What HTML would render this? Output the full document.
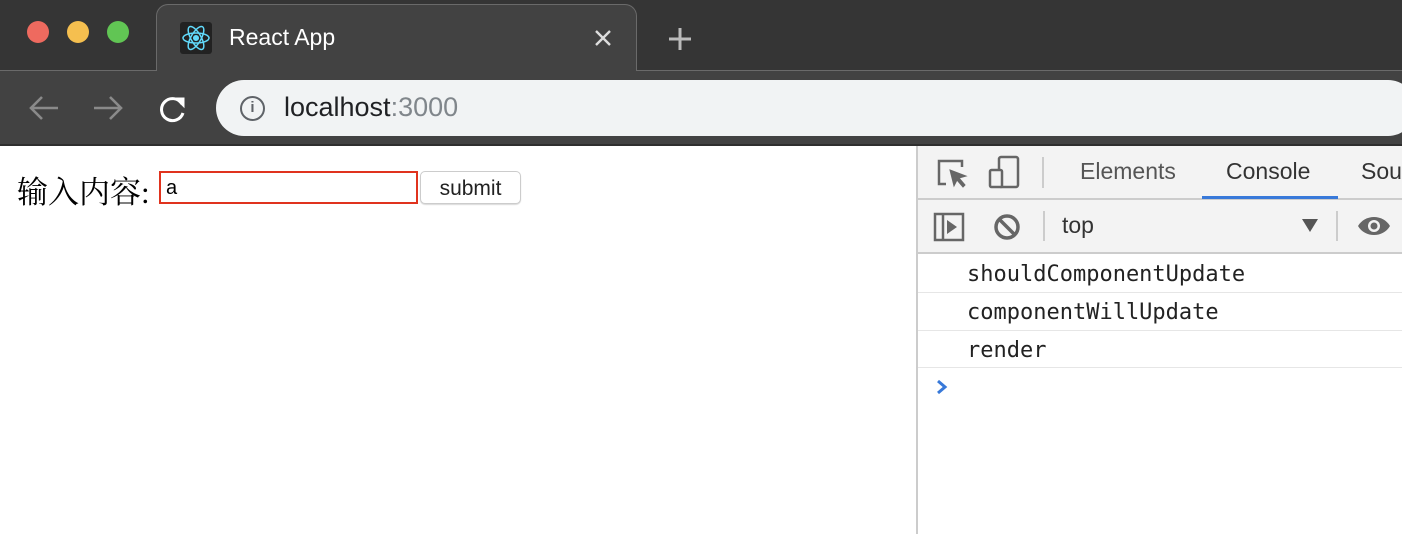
<!DOCTYPE html>
<html><head><meta charset="utf-8"><style>
*{margin:0;padding:0;box-sizing:border-box}
body{width:1402px;height:534px;overflow:hidden;background:#fff;font-family:"Liberation Sans",sans-serif;position:relative}
.abs{position:absolute}
.mono{font-family:"DejaVu Sans Mono","Liberation Mono",monospace}
</style></head><body>
<div class="abs" style="left:0;top:0;width:1402px;height:71px;background:#353535"></div>
<div class="abs" style="left:0;top:70px;width:1402px;height:1px;background:#6a6a6a"></div>
<div class="abs" style="left:156px;top:4px;width:481px;height:70px;background:#424242;border:1px solid #6a6a6a;border-bottom:none;border-radius:12px 12px 0 0"></div>
<div class="abs" style="left:0;top:71px;width:1402px;height:75px;background:#424242"></div>
<div class="abs" style="left:0;top:144px;width:1402px;height:2px;background:#2e2e2e"></div>
<div class="abs" style="left:27px;top:21px;width:22px;height:22px;border-radius:50%;background:#ee6a5f"></div>
<div class="abs" style="left:67px;top:21px;width:22px;height:22px;border-radius:50%;background:#f5bf4f"></div>
<div class="abs" style="left:107px;top:21px;width:22px;height:22px;border-radius:50%;background:#61c554"></div>
<div class="abs" style="left:180px;top:22px;width:32px;height:32px;background:#222;border-radius:3px"></div>
<svg class="abs" style="left:180px;top:22px" width="32" height="32" viewBox="0 0 32 32" fill="none" stroke="#61dafb" stroke-width="1.5"><ellipse cx="16" cy="16" rx="13" ry="5"/><ellipse cx="16" cy="16" rx="13" ry="5" transform="rotate(60 16 16)"/><ellipse cx="16" cy="16" rx="13" ry="5" transform="rotate(120 16 16)"/><circle cx="16" cy="16" r="2.3" fill="#61dafb"/></svg>
<div class="abs" style="left:229px;top:24px;color:#fff;font-size:23px">React App</div>
<svg class="abs" style="left:594px;top:29px" width="18" height="18" stroke="#ddd" stroke-width="2.4"><path d="M2 2L16 16M16 2L2 16"/></svg>
<svg class="abs" style="left:667px;top:26px" width="26" height="26" stroke="#bbb" stroke-width="3"><path d="M13 2V24M2 13H24"/></svg>
<svg class="abs" style="left:28px;top:94px" width="32" height="28" fill="none" stroke="#8a8a8a" stroke-width="2.6"><path d="M30 14H4M14 3L3 14L14 25"/></svg>
<svg class="abs" style="left:92px;top:94px" width="32" height="28" fill="none" stroke="#8a8a8a" stroke-width="2.6"><path d="M2 14H28M18 3L29 14L18 25"/></svg>
<svg class="abs" style="left:158px;top:93px" width="30" height="30" fill="none" stroke="#fff" stroke-width="3"><path d="M24 11A11 11 0 1 0 25 20"/><path d="M17 5H26V14Z" fill="#fff" stroke-width="1"/></svg>
<div class="abs" style="left:216px;top:80px;width:1200px;height:56px;background:#f1f3f4;border-radius:28px"></div>
<div class="abs" style="left:240px;top:96px;width:25px;height:25px;border:2.5px solid #5f6368;border-radius:50%;color:#5f6368;font-size:15px;font-weight:bold;text-align:center;line-height:20px">i</div>
<div class="abs" style="left:284px;top:92px;font-size:27px;color:#202124">localhost<span style="color:#80868b">:3000</span></div>

<div class="abs" style="left:17px;top:167px;font-size:31px;font-family:'Liberation Serif','Noto Serif CJK SC',serif;color:#000">输入内容:</div>
<div class="abs" style="left:159px;top:171px;width:259px;height:33px;border:2px solid #e0331e;font-size:20px;padding-left:5px;line-height:31px">a</div>
<div class="abs" style="left:420px;top:171px;width:101px;height:33px;border:1px solid #ccc;border-radius:5px;background:#fff;box-shadow:0 1px 1px rgba(0,0,0,.15);font-size:21px;text-align:center;line-height:33px;color:#222">submit</div>

<div class="abs" style="left:916px;top:146px;width:486px;height:388px;background:#fff;border-left:2px solid #ccc"></div>
<div class="abs" style="left:918px;top:146px;width:484px;height:107px;background:#f3f3f3"></div>
<div class="abs" style="left:918px;top:198px;width:484px;height:2px;background:#ccc"></div>
<div class="abs" style="left:918px;top:252px;width:484px;height:2px;background:#ccc"></div>
<svg class="abs" style="left:936px;top:156px" width="34" height="34" fill="none" stroke="#666" stroke-width="2.5"><path d="M10 28H3V5H26V11"/><path d="M14 14L30 20L23 22L29 29L27 31L21 24L18 30Z" fill="#666" stroke-width="1"/></svg>
<svg class="abs" style="left:988px;top:155px" width="34" height="36" fill="none" stroke="#666" stroke-width="2.5"><rect x="11" y="2" width="19" height="30" rx="2"/><rect x="2" y="15" width="12" height="17" rx="1.5" fill="#f3f3f3"/></svg>
<div class="abs" style="left:1042px;top:157px;width:2px;height:31px;background:#ccc"></div>
<div class="abs" style="left:1080px;top:158px;font-size:23px;color:#555">Elements</div>
<div class="abs" style="left:1226px;top:158px;font-size:23px;color:#333">Console</div>
<div class="abs" style="left:1202px;top:196px;width:136px;height:3px;background:#3879d9"></div>
<div class="abs" style="left:1361px;top:158px;font-size:23px;color:#333">Sou</div>
<svg class="abs" style="left:933px;top:212px" width="32" height="30" fill="none" stroke="#666" stroke-width="2.5"><rect x="2" y="2" width="28" height="26"/><path d="M10 2V28"/><path d="M14 8L24 15L14 22Z" fill="#666" stroke="none"/></svg>
<svg class="abs" style="left:993px;top:213px" width="28" height="28" fill="none" stroke="#666" stroke-width="3.5"><circle cx="14" cy="14" r="11"/><path d="M6 6L22 22"/></svg>
<div class="abs" style="left:1043px;top:211px;width:2px;height:30px;background:#ccc"></div>
<div class="abs" style="left:1062px;top:212px;font-size:23px;color:#333">top</div>
<svg class="abs" style="left:1302px;top:219px" width="16" height="14"><path d="M0 0H16L8 13Z" fill="#555"/></svg>
<div class="abs" style="left:1336px;top:211px;width:2px;height:30px;background:#ccc"></div>
<svg class="abs" style="left:1357px;top:213px" width="34" height="26"><path d="M1 13C8 1 26 1 33 13C26 25 8 25 1 13Z" fill="#666"/><circle cx="17" cy="13" r="6" fill="#f3f3f3"/><circle cx="17" cy="13" r="3.5" fill="#666"/></svg>

<div class="abs mono" style="left:967px;top:262px;font-size:22px;color:#222">shouldComponentUpdate</div>
<div class="abs" style="left:918px;top:292px;width:484px;height:1px;background:#e6e6e6"></div>
<div class="abs mono" style="left:967px;top:300px;font-size:22px;color:#222">componentWillUpdate</div>
<div class="abs" style="left:918px;top:330px;width:484px;height:1px;background:#e6e6e6"></div>
<div class="abs mono" style="left:967px;top:338px;font-size:22px;color:#222">render</div>
<div class="abs" style="left:918px;top:367px;width:484px;height:1px;background:#e6e6e6"></div>
<svg class="abs" style="left:935px;top:378px" width="14" height="18" fill="none" stroke="#3879d9" stroke-width="3"><path d="M3 3L10 9L3 15"/></svg>
</body></html>
